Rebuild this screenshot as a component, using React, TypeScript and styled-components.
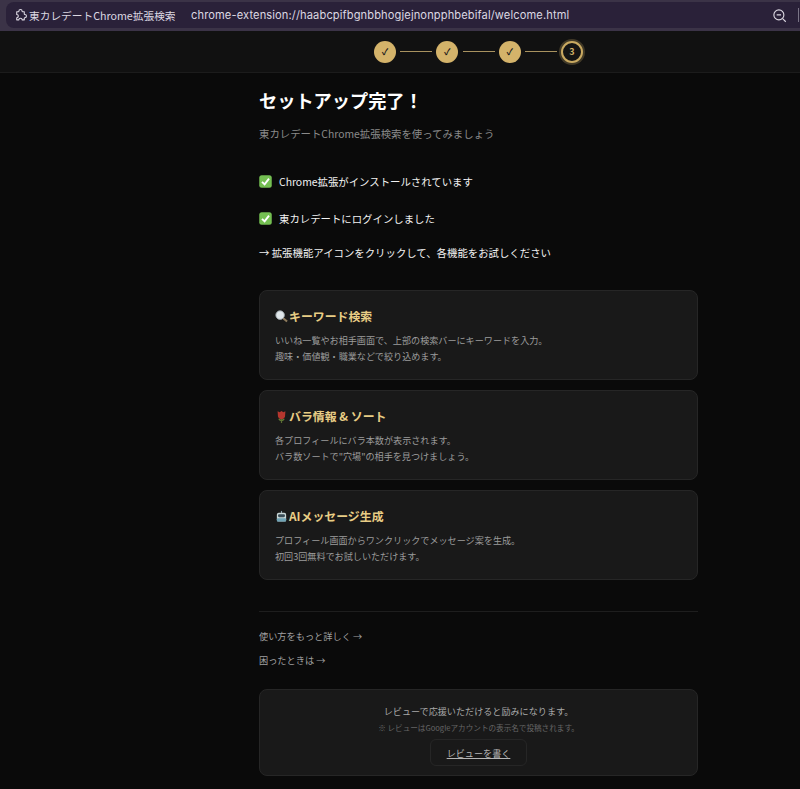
import React from "react";
import styled, { createGlobalStyle } from "styled-components";

const Global = createGlobalStyle`
  html, body { margin: 0; padding: 0; background: #0a0a0a; overflow: hidden; }
  body { font-family: "Noto Sans CJK JP", "Noto Sans", sans-serif; }
  #root { width: 800px; height: 789px; overflow: hidden; }
`;

const Chrome = styled.header`
  height: 31px;
  box-sizing: border-box;
  background: #3b3347;
  padding: 2px 0 3px 6px;
  display: flex;
`;
const Omnibox = styled.div`
  flex: 1;
  display: flex;
  align-items: center;
  background: #2a2139;
  border-radius: 8px 0 0 8px;
  padding-left: 8px;
  color: #dcd8e2;
`;
const TabName = styled.span`
  margin-left: 2px;
  width: 162px;
  flex: none;
  white-space: nowrap;
  font-size: 10.7px;
`;
const Url = styled.span`
  font-family: "Inter", "Liberation Sans", sans-serif;
  font-size: 11.1px;
  letter-spacing: 0.12px;
  white-space: nowrap;
  flex: 1;
`;
const ToolIcon = styled.svg`
  width: 15px;
  height: 15px;
  margin-right: 11px;
  flex: none;
`;
const Divider = styled.span`
  width: 1px;
  height: 14px;
  margin-right: 1px;
  flex: none;
  background: #7a7486;
`;
const BarClip = styled.div`
  background: #111111;
  width: 800px;
  overflow: hidden;
`;
const StepBar = styled.div`
  height: 42px;
  box-sizing: border-box;
  width: 957px;
  border-bottom: 1px solid #1c1c1c;
  display: flex;
  align-items: center;
  justify-content: center;
`;
const Circle = styled.div<{ $active?: boolean }>`
  width: 22px;
  height: 22px;
  box-sizing: border-box;
  border-radius: 50%;
  display: flex;
  align-items: center;
  justify-content: center;
  flex: none;
  font-size: 9px;
  font-weight: 600;
  background: ${(p) => (p.$active ? "#141414" : "#d4b36a")};
  color: ${(p) => (p.$active ? "#d4b36a" : "#1a1a1a")};
  border: ${(p) => (p.$active ? "2px solid #c9a961" : "none")};
  box-shadow: ${(p) => (p.$active ? "0 0 0 2px rgba(212,179,106,.25)" : "none")};
`;
const Line = styled.div`
  width: 32px;
  height: 1px;
  margin: 0 4.17px;
  background: #a8925f;
  flex: none;
`;
const Wide = styled.div`
  width: 957px;
  display: flex;
  justify-content: center;
`;
const Main = styled.main`
  width: 439px;
  flex: none;
  padding-top: 13px;
`;
const Title = styled.h1`
  margin: 0;
  font-size: 18.2px;
  line-height: 28px;
  font-weight: 700;
  color: #ffffff;
`;
const Subtitle = styled.p`
  margin: 11px 0 0;
  font-size: 10.4px;
  line-height: 18px;
  color: #8a8a8a;
`;
const Status = styled.p<{ $top: number }>`
  margin: ${(p) => p.$top}px 0 0;
  display: flex;
  align-items: center;
  gap: 7px;
  height: 18px;
  font-size: 10.4px;
  font-weight: 400;
  color: #f2f2f2;
`;
const Card = styled.section<{ $top: number }>`
  box-sizing: border-box;
  height: 90px;
  margin-top: ${(p) => p.$top}px;
  background: #191919;
  border: 1px solid #262626;
  border-radius: 8px;
  padding: 15px 15px 0;
`;
const CardTitle = styled.h2`
  margin: 0;
  display: flex;
  align-items: center;
  gap: 1px;
  font-size: 11.9px;
  line-height: 20px;
  font-weight: 700;
  color: #e8cd85;
`;
const CardText = styled.p`
  margin: 7px 0 0;
  font-size: 9.1px;
  line-height: 15.5px;
  color: #9c9c9c;
`;
const Rule = styled.hr`
  margin: 31px 0 0;
  border: 0;
  border-top: 1px solid #1e1e1e;
`;
const FootLink = styled.a<{ $top: number }>`
  display: block;
  margin-top: ${(p) => p.$top}px;
  font-size: 9.2px;
  line-height: 16px;
  color: #a0a0a0;
  text-decoration: none;
`;
const Review = styled.section`
  box-sizing: border-box;
  height: 87px;
  margin-top: 21px;
  background: #191919;
  border: 1px solid #262626;
  border-radius: 8px;
  padding-top: 13px;
  display: flex;
  flex-direction: column;
  align-items: center;
`;
const ReviewText = styled.p`
  margin: 0;
  font-size: 9.1px;
  line-height: 16px;
  color: #a8a8a8;
`;
const ReviewNote = styled.p`
  margin: 2px 0 0;
  font-size: 7.6px;
  line-height: 14px;
  color: #666666;
`;
const ReviewButton = styled.a`
  box-sizing: border-box;
  margin-top: 4px;
  width: 97px;
  height: 27px;
  display: flex;
  align-items: center;
  justify-content: center;
  border: 1px solid #262626;
  border-radius: 6px;
  font-size: 9.1px;
  color: #b5b5b5;
  text-decoration: underline;
`;
const Emoji = styled.svg`
  width: 13px;
  height: 13px;
  flex: none;
`;

const PuzzleIcon = () => (
  <svg width="13" height="13" viewBox="0 0 24 24" fill="none" stroke="#dcd8e2" strokeWidth="2" strokeLinejoin="round">
    <path d="M9 4a3 3 0 0 1 6 0c0 .6.4 1 1 1h3v4c0 .6.4 1 1 1a3 3 0 0 1 0 6c-.6 0-1 .4-1 1v3h-4a3 3 0 0 0-6 0H5v-4a3 3 0 0 0 0-6V5h3c.6 0 1-.4 1-1z" />
  </svg>
);
const CheckEmoji = () => (
  <Emoji viewBox="0 0 13 13">
    <rect x="0.25" y="0.25" width="12.5" height="12.5" rx="2.5" fill="#74bf52" />
    <path d="M3 6.8 5.600 9.400 10 3.600" fill="none" stroke="#fff" strokeWidth="1.9" />
  </Emoji>
);
const LensEmoji = () => (
  <Emoji viewBox="0 0 14 14">
    <path d="M8.5 8.5 13 12.5" stroke="#8d7a5c" strokeWidth="2.2" />
    <circle cx="5.5" cy="5.5" r="4.6" fill="#dfe6ea" stroke="#9aa3a8" strokeWidth="1" />
  </Emoji>
);
const RoseEmoji = () => (
  <Emoji viewBox="0 0 14 14">
    <path d="M7 8v6" stroke="#5d6b33" strokeWidth="1.300" />
    <path d="M3.500 9.500c1.300 0 2.600.4 3.500 1.700.9-1.300 2.200-1.700 3.500-1.700-.4 1.700-1.800 2.600-3.500 2.600s-3.100-.9-3.500-2.600z" fill="#5f7a35" />
    <path d="M2.800 1.300 5 2.300 7 1l2 1.300 2.200-1-.4 5.700c-.4 1.700-2 2.900-3.800 2.900S3.600 8.700 3.200 7z" fill="#b5362e" />
  </Emoji>
);
const RobotEmoji = () => (
  <Emoji viewBox="0 0 14 14">
    <rect x="6.4" y="1" width="1.200" height="2.500" fill="#8fa3ad" />
    <rect x="2" y="3" width="10" height="9.500" rx="2" fill="#c9d6d6" />
    <rect x="3.200" y="4.700" width="7.600" height="3" rx="1.500" fill="#3a4c56" />
    <rect x="2" y="9" width="10" height="3.500" rx="1" fill="#6fa3b5" />
  </Emoji>
);

const cards = [
  { top: 29, icon: <LensEmoji />, title: "キーワード検索", lines: ["いいね一覧やお相手画面で、上部の検索バーにキーワードを入力。", "趣味・価値観・職業などで絞り込めます。"] },
  { top: 10, icon: <RoseEmoji />, title: "バラ情報 & ソート", lines: ["各プロフィールにバラ本数が表示されます。", "バラ数ソートで\"穴場\"の相手を見つけましょう。"] },
  { top: 10, icon: <RobotEmoji />, title: "AIメッセージ生成", lines: ["プロフィール画面からワンクリックでメッセージ案を生成。", "初回3回無料でお試しいただけます。"] },
];

export default function App() {
  return (
    <>
      <Global />
      <Chrome>
        <Omnibox>
          <PuzzleIcon />
          <TabName>東カレデートChrome拡張検索</TabName>
          <Url>chrome-extension://haabcpifbgnbbhogjejnonpphbebifal/welcome.html</Url>
          <ToolIcon viewBox="0 0 24 24" fill="none" stroke="#dcd8e2" strokeWidth="1.8">
            <circle cx="11" cy="11" r="8" />
            <path d="M7.500 11h7M17 17l5 5" />
          </ToolIcon>
          <Divider />
        </Omnibox>
      </Chrome>
      <BarClip>
        <StepBar>
          <Circle>✓</Circle>
          <Line />
          <Circle>✓</Circle>
          <Line />
          <Circle>✓</Circle>
          <Line />
          <Circle $active>3</Circle>
        </StepBar>
      </BarClip>
      <Wide>
        <Main>
          <Title>セットアップ完了！</Title>
          <Subtitle>東カレデートChrome拡張検索を使ってみましょう</Subtitle>
          <Status $top={29}><CheckEmoji />Chrome拡張がインストールされています</Status>
          <Status $top={19}><CheckEmoji />東カレデートにログインしました</Status>
          <Status $top={16}>→ 拡張機能アイコンをクリックして、各機能をお試しください</Status>
          {cards.map((c) => (
            <Card key={c.title} $top={c.top}>
              <CardTitle>{c.icon}{c.title}</CardTitle>
              <CardText>{c.lines[0]}<br />{c.lines[1]}</CardText>
            </Card>
          ))}
          <Rule />
          <FootLink $top={16} href="#">使い方をもっと詳しく →</FootLink>
          <FootLink $top={8} href="#">困ったときは →</FootLink>
          <Review>
            <ReviewText>レビューで応援いただけると励みになります。</ReviewText>
            <ReviewNote>※ レビューはGoogleアカウントの表示名で投稿されます。</ReviewNote>
            <ReviewButton href="#">レビューを書く</ReviewButton>
          </Review>
        </Main>
      </Wide>
    </>
  );
}
